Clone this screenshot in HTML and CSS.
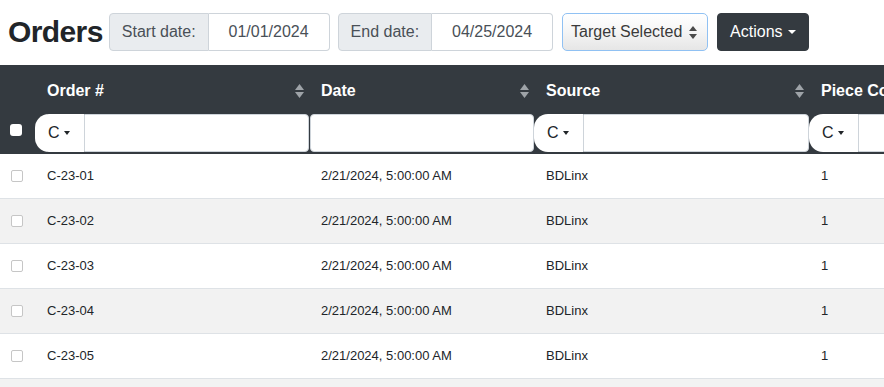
FILE: index.html
```html
<!DOCTYPE html>
<html lang="en">
<head>
<meta charset="utf-8">
<title>Orders</title>
<link rel="stylesheet" href="styles.css">
</head>
<body>
<div class="toolbar">
  <h1 class="title">Orders</h1>
  <div class="group">
    <span class="group-label">Start date:</span>
    <input class="group-input" type="text" value="01/01/2024">
  </div>
  <div class="group group-end">
    <span class="group-label">End date:</span>
    <input class="group-input" type="text" value="04/25/2024">
  </div>
  <div class="select">
    <span>Target Selected</span>
    <svg class="select-arrows" width="8" height="13" viewBox="0 0 8 13"><polygon points="4,0 8,5 0,5"/><polygon points="0,8 8,8 4,13"/></svg>
  </div>
  <button class="actions" type="button">Actions</button>
</div>

<div class="table-wrap">
<table class="orders">
  <colgroup>
    <col class="col-check"><col class="col-order"><col class="col-date"><col class="col-source"><col class="col-piece">
  </colgroup>
  <thead>
    <tr class="head-row">
      <th></th>
      <th><div class="th-inner"><span>Order #</span><svg class="sort" width="9" height="14" viewBox="0 0 9 14"><polygon points="4.5,0 9,6 0,6"/><polygon points="0,8 9,8 4.5,14"/></svg></div></th>
      <th><div class="th-inner"><span>Date</span><svg class="sort" width="9" height="14" viewBox="0 0 9 14"><polygon points="4.5,0 9,6 0,6"/><polygon points="0,8 9,8 4.5,14"/></svg></div></th>
      <th><div class="th-inner"><span>Source</span><svg class="sort" width="9" height="14" viewBox="0 0 9 14"><polygon points="4.5,0 9,6 0,6"/><polygon points="0,8 9,8 4.5,14"/></svg></div></th>
      <th><div class="th-inner"><span>Piece Count</span><svg class="sort" width="9" height="14" viewBox="0 0 9 14"><polygon points="4.5,0 9,6 0,6"/><polygon points="0,8 9,8 4.5,14"/></svg></div></th>
    </tr>
    <tr class="filter-row">
      <th class="filter-check"><span class="hcheck"></span></th>
      <th><div class="filter"><button class="op" type="button">C</button><input class="filter-input" type="text"></div></th>
      <th><input class="filter-input full" type="text"></th>
      <th><div class="filter"><button class="op" type="button">C</button><input class="filter-input" type="text"></div></th>
      <th><div class="filter"><button class="op" type="button">C</button><input class="filter-input" type="text"></div></th>
    </tr>
  </thead>
  <tbody>
    <tr><td class="check-cell"><span class="rcheck"></span></td><td>C-23-01</td><td>2/21/2024, 5:00:00 AM</td><td>BDLinx</td><td>1</td></tr>
    <tr><td class="check-cell"><span class="rcheck"></span></td><td>C-23-02</td><td>2/21/2024, 5:00:00 AM</td><td>BDLinx</td><td>1</td></tr>
    <tr><td class="check-cell"><span class="rcheck"></span></td><td>C-23-03</td><td>2/21/2024, 5:00:00 AM</td><td>BDLinx</td><td>1</td></tr>
    <tr><td class="check-cell"><span class="rcheck"></span></td><td>C-23-04</td><td>2/21/2024, 5:00:00 AM</td><td>BDLinx</td><td>1</td></tr>
    <tr><td class="check-cell"><span class="rcheck"></span></td><td>C-23-05</td><td>2/21/2024, 5:00:00 AM</td><td>BDLinx</td><td>1</td></tr>
    <tr class="row-partial"><td class="check-cell"></td><td></td><td></td><td></td><td></td></tr>
  </tbody>
</table>
</div>
</body>
</html>
```

FILE: styles.css
```css
html, body {
  margin: 0;
  padding: 0;
  background: #fff;
}
body {
  font-family: "Liberation Sans", Arial, Helvetica, sans-serif;
  color: #212529;
  overflow: hidden;
  height: 387px;
}

.toolbar {
  display: flex;
  align-items: center;
  padding: 13px 8px 14px;
}
.title {
  margin: 0 6px 0 0;
  font-size: 30px;
  line-height: 36px;
  font-weight: 700;
  letter-spacing: -0.6px;
  color: #212529;
}
.group {
  display: flex;
  height: 38px;
  margin-right: 8px;
}
.group-end {
  margin-right: 9px;
}
.group-label {
  display: flex;
  align-items: center;
  padding: 0 12px;
  background: #e9ecef;
  border: 1px solid #ced4da;
  border-radius: 4px 0 0 4px;
  color: #495057;
  font-size: 16px;
}
.group-input {
  width: 121px;
  height: 38px;
  box-sizing: border-box;
  border: 1px solid #ced4da;
  border-left: 0;
  border-radius: 0 4px 4px 0;
  padding: 0;
  text-align: center;
  font-family: "Liberation Sans", Arial, sans-serif;
  font-size: 16px;
  color: #495057;
  background: #fff;
}
.select {
  display: flex;
  align-items: center;
  justify-content: space-between;
  width: 146px;
  height: 38px;
  box-sizing: border-box;
  padding: 0 10px 0 8px;
  margin-right: 9px;
  border: 1px solid #90c1f3;
  border-radius: 5px;
  background: linear-gradient(#ffffff 0%, #f6f6f6 45%, #e6e6e6 100%);
  color: #3a3a3a;
  font-size: 16px;
}
.select-arrows {
  fill: #4a4a4a;
}
.actions {
  height: 38px;
  padding: 0 12px;
  border: 1px solid #343a40;
  border-radius: 4px;
  background: #343a40;
  color: #fff;
  font-family: "Liberation Sans", Arial, sans-serif;
  font-size: 16px;
  display: flex;
  align-items: center;
}
.actions::after {
  content: "";
  display: inline-block;
  margin-left: 5px;
  border-top: 4px solid #fff;
  border-left: 4px solid transparent;
  border-right: 4px solid transparent;
}

.table-wrap {
  width: 884px;
  overflow: hidden;
}
.orders {
  border-collapse: separate;
  border-spacing: 0;
  table-layout: fixed;
  width: 1084px;
}
.col-check { width: 35px; }
.col-order { width: 274px; }
.col-date { width: 225px; }
.col-source { width: 275px; }
.col-piece { width: 275px; }

.head-row th {
  background: #343a40;
  color: #fff;
  font-size: 16px;
  font-weight: 700;
  line-height: 24px;
  padding: 14px 5px 11px 12px;
  text-align: left;
  white-space: nowrap;
  overflow: hidden;
}
.th-inner {
  display: flex;
  justify-content: space-between;
  align-items: center;
}
.sort {
  fill: #9ea3a8;
  flex: none;
}
.filter-row th {
  background: #343a40;
  padding: 0 0 2px 0;
  vertical-align: top;
}
.filter-row .filter-check {
  padding: 10px 0 0 10px;
}
.hcheck {
  display: block;
  width: 12px;
  height: 12px;
  background: #fff;
  border-radius: 3px;
}
.filter {
  display: flex;
  height: 38px;
}
.op {
  flex: none;
  width: 49px;
  height: 38px;
  padding: 0 0 0 13px;
  border: 0;
  border-radius: 14px 0 0 14px;
  background: #fff;
  color: #212529;
  font-family: "Liberation Sans", Arial, sans-serif;
  font-size: 16px;
  display: flex;
  align-items: center;
}
.op::after {
  content: "";
  display: inline-block;
  margin-left: 4px;
  border-top: 4px solid #212529;
  border-left: 3.5px solid transparent;
  border-right: 3.5px solid transparent;
}
.filter-input {
  flex: 1;
  min-width: 0;
  height: 38px;
  box-sizing: border-box;
  border: 1px solid #ced4da;
  border-radius: 0 4px 4px 0;
  background: #fff;
  padding: 0 8px;
  margin: 0;
}
.filter-input.full {
  display: block;
  width: calc(100% - 1px);
  margin-left: 1px;
  border-radius: 4px;
}

.orders td {
  padding: 12px;
  height: 20px;
  font-size: 13px;
  line-height: 20px;
  color: #212529;
  border-bottom: 1px solid #dee2e6;
  white-space: nowrap;
  vertical-align: top;
}
.orders tbody tr:nth-child(even) td {
  background: #f2f2f2;
}
.orders td.check-cell {
  padding: 12px 0 12px 11px;
}
.rcheck {
  display: block;
  margin-top: 4px;
  width: 12px;
  height: 12px;
  box-sizing: border-box;
  border: 1px solid #c6c6c6;
  border-radius: 2px;
  background: #fff;
}
```
